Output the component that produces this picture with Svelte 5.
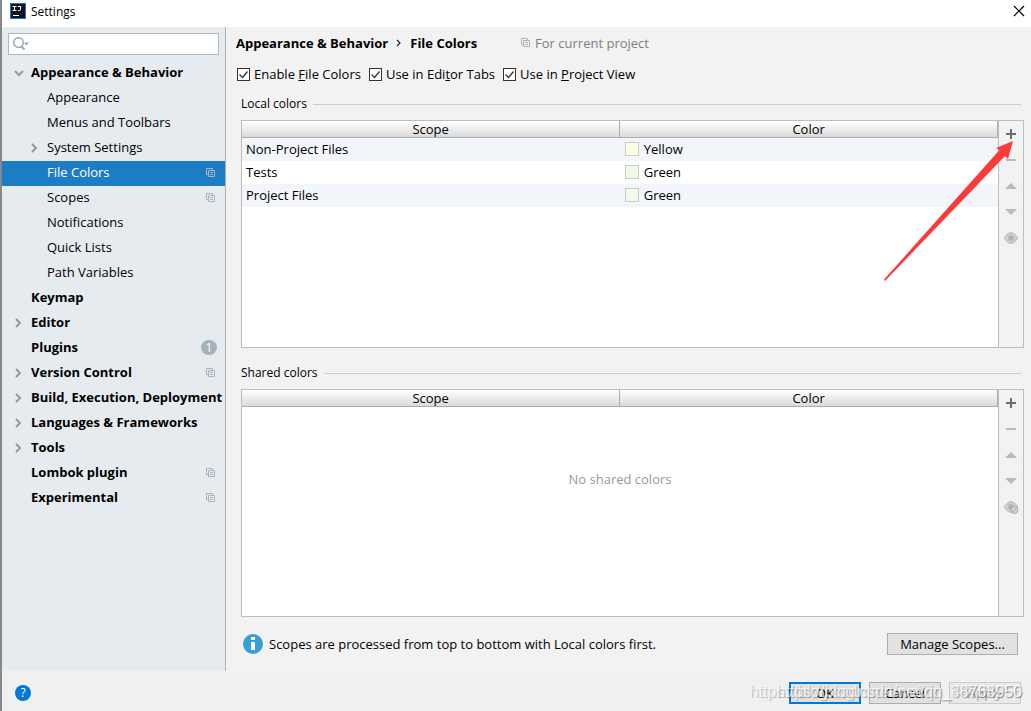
<script lang="ts">
  type Scope = { name: string; color: string; tone: string };

  const tree = [
    { label: 'Appearance & Behavior', bold: true, arrow: 'down' },
    { label: 'Appearance', child: true },
    { label: 'Menus and Toolbars', child: true },
    { label: 'System Settings', child: true, arrow: 'right' },
    { label: 'File Colors', child: true, project: true, selected: true },
    { label: 'Scopes', child: true, project: true },
    { label: 'Notifications', child: true },
    { label: 'Quick Lists', child: true },
    { label: 'Path Variables', child: true },
    { label: 'Keymap', bold: true },
    { label: 'Editor', bold: true, arrow: 'right' },
    { label: 'Plugins', bold: true, badge: 1 },
    { label: 'Version Control', bold: true, arrow: 'right', project: true },
    { label: 'Build, Execution, Deployment', bold: true, arrow: 'right' },
    { label: 'Languages & Frameworks', bold: true, arrow: 'right' },
    { label: 'Tools', bold: true, arrow: 'right' },
    { label: 'Lombok plugin', bold: true, project: true },
    { label: 'Experimental', bold: true, project: true }
  ];

  const localScopes: Scope[] = [
    { name: 'Non-Project Files', color: 'Yellow', tone: 'yellow' },
    { name: 'Tests', color: 'Green', tone: 'green' },
    { name: 'Project Files', color: 'Green', tone: 'green' }
  ];

  const groups = [
    { title: 'Local colors', rows: localScopes, shared: false },
    { title: 'Shared colors', rows: [] as Scope[], shared: true }
  ];

  let enabled = $state(true);
  let inTabs = $state(true);
  let inProject = $state(true);
  let query = $state('');
</script>

{#snippet copyIcon()}
  <svg class="copy" width="10" height="10" viewBox="0 0 10 10" fill="none" stroke="currentColor" aria-hidden="true">
    <path d="M2.5 6.5H.5V.5h6v2M2.5 2.5h6v6h-6zM4 4.5h3M4 6.5h3" />
  </svg>
{/snippet}

<div class="window">
  <header class="titlebar">
    <svg width="16" height="16" viewBox="0 0 16 16" aria-hidden="true">
      <rect width="16" height="16" fill="#1b74d8" />
      <rect x="1" y="1" width="14" height="14" fill="#10131a" />
      <path d="M2.500 3.500h4M4.500 3.500v4M2.500 7.500h4M8 3.500h3M10.500 3.500v3q0 1-1 1H8M3 12.500h6" fill="none" stroke="#fff" />
    </svg>
    <span class="title">Settings</span>
    <button class="close" aria-label="Close">
      <svg width="12" height="12" viewBox="0 0 12 12" aria-hidden="true">
        <path d="M1 1l10 10M11 1L1 11" stroke="#000" stroke-width="1.200" />
      </svg>
    </button>
  </header>

  <div class="body">
    <aside class="sidebar">
      <div class="search">
        <svg width="18" height="16" viewBox="0 0 18 16" fill="none" aria-hidden="true">
          <circle cx="5.500" cy="6.500" r="4.800" stroke="#9aa7b0" stroke-width="1.400" />
          <path d="M8.500 10.500l3 3" stroke="#9aa7b0" stroke-width="1.800" />
          <path d="M11 6.500h5l-2.500 3z" fill="#9aa7b0" />
        </svg>
        <input type="text" aria-label="Search settings" bind:value={query} />
      </div>
      <nav>
        {#each tree as item}
          <a href="#settings" class="item" class:child={item.child} class:bold={item.bold} class:selected={item.selected}>
            <span class="arrow">
              {#if item.arrow === 'down'}
                <svg width="10" height="10" viewBox="0 0 10 10" fill="none" stroke="#999" stroke-width="2"><path d="M1 3l4 4 4-4" /></svg>
              {:else if item.arrow === 'right'}
                <svg width="10" height="10" viewBox="0 0 10 10" fill="none" stroke="#999" stroke-width="2"><path d="M2 1l4 4-4 4" /></svg>
              {/if}
            </span>
            <span class="label">{item.label}</span>
            {#if item.project}{@render copyIcon()}{/if}
            {#if item.badge}<span class="badge">{item.badge}</span>{/if}
          </a>
        {/each}
      </nav>
    </aside>

    <main>
      <div class="crumbs">
        <span class="bold">Appearance &amp; Behavior</span>
        <svg width="6" height="8" viewBox="0 0 6 8" fill="none" aria-hidden="true"><path d="M1 1l3 3-3 3" stroke="#222" stroke-width="1.200" /></svg>
        <span class="bold">File Colors</span>
        <span class="scope-note">{@render copyIcon()}For current project</span>
      </div>

      <div class="checks">
        <label><input type="checkbox" bind:checked={enabled} /><span>Enable <u>F</u>ile Colors</span></label>
        <label><input type="checkbox" bind:checked={inTabs} /><span>Use in Edi<u>t</u>or Tabs</span></label>
        <label><input type="checkbox" bind:checked={inProject} /><span>Use in <u>P</u>roject View</span></label>
      </div>

      {#each groups as group}
        <section>
          <h2>{group.title}</h2>
          <div class="panel">
            <div class="table-area">
              <table>
                <thead>
                  <tr><th>Scope</th><th>Color</th></tr>
                </thead>
                <tbody>
                  {#each group.rows as row}
                    <tr>
                      <td>{row.name}</td>
                      <td><span class="color"><i class="swatch {row.tone}"></i>{row.color}</span></td>
                    </tr>
                  {/each}
                </tbody>
              </table>
              {#if group.rows.length === 0}
                <p class="empty">No shared colors</p>
              {/if}
            </div>
            <div class="tools">
              <button aria-label="Add"><svg width="16" height="16" viewBox="0 0 16 16"><path d="M7 3h2v4h4v2H9v4H7V9H3V7h4z" fill="#6e6e6e" /></svg></button>
              <button aria-label="Remove" disabled><svg width="16" height="16" viewBox="0 0 16 16"><path d="M3 7h10v2H3z" fill="#bababa" /></svg></button>
              <button aria-label="Move up" disabled><svg width="16" height="16" viewBox="0 0 16 16"><path d="M2 11l6-6 6 6z" fill="#bababa" /></svg></button>
              <button aria-label="Move down" disabled><svg width="16" height="16" viewBox="0 0 16 16"><path d="M2 5l6 6 6-6z" fill="#bababa" /></svg></button>
              <button aria-label={group.shared ? 'Unshare' : 'Share'} disabled>
                <svg width="16" height="16" viewBox="0 0 16 16">
                  <path d="M1 8q7-11 14 0q-7 11-14 0z" fill="#cdcdcd" stroke="#bdbdbd" />
                  <circle cx="8" cy="8" r="3.800" fill="#bababa" stroke="#d4d4d4" />
                  <circle cx="8" cy="8" r="1.800" fill="#adadad" />
                  {#if group.shared}
                    <circle cx="11.500" cy="11" r="3.500" fill="#d4d4d4" stroke="#b0b0b0" />
                    <path d="M9.200 13.300l4.600-4.600" stroke="#aaa" />
                  {/if}
                </svg>
              </button>
            </div>
            {#if !group.shared}
              <svg class="pointer" width="132" height="142" viewBox="0 0 132 142" aria-hidden="true">
                <path d="M1 139.500L116.500 10L113 8L130 1L125 19L122 16L2 141z" fill="#fc3a3a" />
              </svg>
            {/if}
          </div>
        </section>
      {/each}

      <div class="hint">
        <svg width="20" height="20" viewBox="0 0 20 20" aria-hidden="true">
          <circle cx="10" cy="10" r="10" fill="#389fd6" />
          <path d="M8 3h4v3H8zM8 8h4v8H8z" fill="#fff" />
        </svg>
        <span>Scopes are processed from top to bottom with Local colors first.</span>
        <button class="btn manage">Manage Scopes...</button>
      </div>
    </main>
  </div>

  <footer>
    <button class="help" aria-label="Help">?</button>
    <button class="btn primary">OK</button>
    <button class="btn">Cancel</button>
    <button class="btn" disabled>Apply</button>
    <span class="mark">https://blog.csdn.net/weixin_44784956</span>
    <span class="mark">https://blog.csdn.net/qq_38763950</span>
  </footer>
</div>

<style>
  :global(body) {
    background: #f2f2f2;
  }

  .window {
    display: flex;
    flex-direction: column;
    min-height: 100vh;
    box-sizing: border-box;
    border-left: 2px solid #85888a;
    font: 13px/18px "Open Sans", "Noto Sans", sans-serif;
    color: #000;
  }

  button {
    font: inherit;
    color: inherit;
    padding: 0;
  }

  svg {
    display: block;
    flex: none;
  }

  .titlebar {
    display: flex;
    align-items: center;
    gap: 5px;
    height: 27px;
    padding: 0 6px 5px 8px;
    box-sizing: border-box;
    background: #fff;
  }

  .title {
    flex: 1;
    padding-top: 2px;
    font-size: 12px;
  }

  .close {
    border: 0;
    background: none;
  }

  .body {
    display: flex;
    flex: 1;
  }

  .sidebar {
    width: 224px;
    flex: none;
    box-sizing: border-box;
    background: #e6ebf0;
    border-right: 1px solid #adb0b2;
  }

  .search {
    display: flex;
    align-items: center;
    height: 22px;
    margin: 6px;
    padding-left: 4px;
    box-sizing: border-box;
    background: #fff;
    border: 1px solid #b4b8bb;
  }

  .search input {
    flex: 1;
    min-width: 0;
    border: 0;
    outline: 0;
    padding: 0;
    font: inherit;
    background: none;
  }

  .item {
    display: flex;
    align-items: center;
    height: 25px;
    padding: 0 9px 2px 12px;
    box-sizing: border-box;
    color: #000;
    text-decoration: none;
    white-space: nowrap;
  }

  .item.child {
    padding-left: 28px;
  }

  .item.selected {
    background: #1d7dc4;
    color: #fff;
  }

  .arrow {
    width: 17px;
    flex: none;
  }

  .label {
    flex: 1;
    padding-bottom: 1px;
  }

  .bold {
    font-weight: 700;
  }

  .copy {
    color: #a9b4bc;
  }

  .badge {
    width: 16px;
    margin-right: -1px;
    border-radius: 8px;
    font-size: 12px;
    line-height: 15px;
    font-weight: 400;
    text-align: center;
    background: #a7b3bb;
    color: #fff;
  }

  main {
    flex: 1;
    min-width: 0;
    display: flex;
    flex-direction: column;
    padding: 6px 7px 0 10px;
    background: #f2f2f2;
  }

  .crumbs {
    display: flex;
    align-items: center;
    gap: 8px;
    height: 20px;
  }

  .scope-note {
    display: flex;
    align-items: center;
    gap: 4px;
    margin-left: 36px;
    color: #808080;
  }

  .checks {
    display: flex;
    gap: 8px;
    padding: 12px 1px 11px;
  }

  .checks label {
    display: flex;
    align-items: center;
    gap: 4px;
  }

  .checks input {
    appearance: none;
    width: 13px;
    height: 13px;
    margin: 0;
    box-sizing: border-box;
    border: 1px solid #333;
    background: #fff;
  }

  .checks input:checked {
    background: #fff url("data:image/svg+xml,%3Csvg xmlns='http://www.w3.org/2000/svg' viewBox='0 0 11 11'%3E%3Cpath d='M1.500 5.500l3 3 5-6' fill='none' stroke='%23333' stroke-width='1.300'/%3E%3C/svg%3E");
  }

  section {
    flex: 1;
    display: flex;
    flex-direction: column;
    padding: 1px 0 15px 5px;
  }

  h2 {
    display: flex;
    align-items: center;
    gap: 6px;
    margin: 0 3px 7px 0;
    font-size: 12px;
    line-height: 18px;
    font-weight: 400;
  }

  h2::after {
    content: "";
    flex: 1;
    height: 1px;
    background: #cdcdcd;
  }

  .panel {
    position: relative;
    flex: 1;
    display: flex;
    border: 1px solid #bdbdbd;
  }

  .table-area {
    flex: 1;
    display: flex;
    flex-direction: column;
    background: #fff;
    border-right: 1px solid #bdbdbd;
  }

  table {
    width: 100%;
    table-layout: fixed;
    border-collapse: collapse;
  }

  th {
    height: 16px;
    padding: 0;
    line-height: 16px;
    font-weight: 400;
    border-right: 1px solid #adadad;
    border-bottom: 1px solid #adadad;
    background: linear-gradient(#fff, #dadada);
  }

  td {
    height: 21px;
    padding: 0 4px 2px;
  }

  td + td {
    padding-left: 5px;
  }

  tbody tr:nth-child(odd) {
    background: #f2f5f9;
  }

  .color {
    display: flex;
    align-items: center;
    gap: 5px;
  }

  .swatch {
    width: 14px;
    height: 14px;
    box-sizing: border-box;
    border: 1px solid #c9cdc9;
  }

  .yellow {
    background: #ffffe4;
  }

  .green {
    background: #effae7;
  }

  .empty {
    margin: 63px 0 0;
    text-align: center;
    color: #999;
  }

  .tools {
    width: 24px;
    display: flex;
    flex-direction: column;
    align-items: center;
    gap: 10px;
    padding-top: 5px;
  }

  .tools button {
    border: 0;
    background: none;
  }

  .pointer {
    position: absolute;
    right: 8px;
    top: 19px;
  }

  .hint {
    display: flex;
    align-items: center;
    gap: 6px;
    padding: 1px 6px 16px 7px;
  }

  .btn {
    width: 72px;
    height: 22px;
    box-sizing: border-box;
    border: 1px solid #adadad;
    line-height: 18px;
    background: #e1e1e1;
  }

  .btn.primary {
    border: 2px solid #0078d7;
  }

  .btn:disabled {
    border-color: #ccc;
    color: #a0a0a0;
    background: #e9e9e9;
  }

  .btn.manage {
    width: 131px;
    margin-left: auto;
  }

  footer {
    position: relative;
    display: flex;
    align-items: center;
    gap: 8px;
    height: 40px;
    padding: 3px 10px 0 13px;
    box-sizing: border-box;
    background: #f0f0f0;
  }

  .help {
    width: 16px;
    height: 16px;
    margin-right: auto;
    border: 0;
    border-radius: 8px;
    font-size: 12px;
    line-height: 16px;
    background: #0078d7;
    color: #fff;
  }

  .mark {
    position: absolute;
    right: 9px;
    top: 11px;
    font: 16px/20px "Liberation Sans", sans-serif;
    color: rgba(255, 255, 255, 0.7);
    text-shadow: 1px 1px 1px rgba(0, 0, 0, 0.25);
    pointer-events: none;
  }
</style>
